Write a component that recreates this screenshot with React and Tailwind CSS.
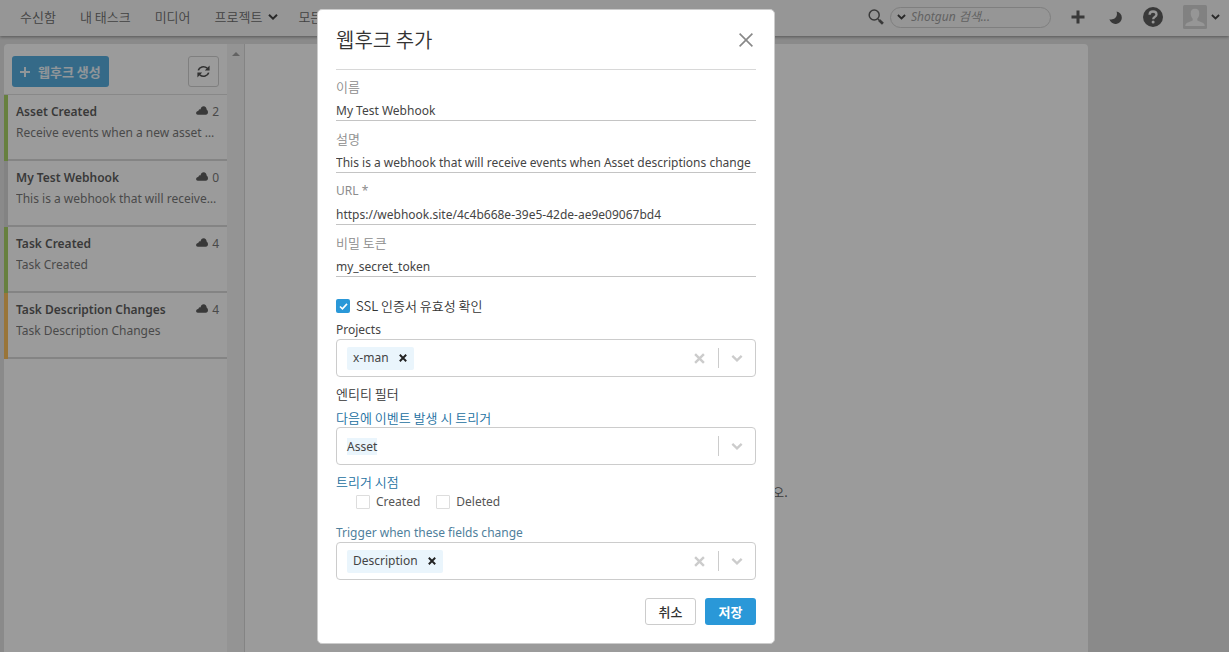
import React from "react";

const webhooks = [
  { name: "Asset Created", text: "Receive events when a new asset was created", count: 2, bar: "border-[#93c63f]" },
  { name: "My Test Webhook", text: "This is a webhook that will receive events when Asset descriptions change", count: 0, bar: "border-[#cccccc]" },
  { name: "Task Created", text: "Task Created", count: 4, bar: "border-[#93c63f]" },
  { name: "Task Description Changes", text: "Task Description Changes", count: 4, bar: "border-[#fbb034]" },
];

const fields = [
  { id: "name", label: "이름", value: "My Test Webhook" },
  { id: "description", label: "설명", value: "This is a webhook that will receive events when Asset descriptions change" },
  { id: "url", label: "URL *", value: "https://webhook.site/4c4b668e-39e5-42de-ae9e09067bd4" },
  { id: "token", label: "비밀 토큰", value: "my_secret_token" },
];

const latin = "font-['Noto_Sans','Noto_Sans_CJK_KR',sans-serif] text-[12px] font-normal";

function Chevron({ className }) {
  return (
    <svg viewBox="0 0 10 6" className={className} fill="none" stroke="currentColor" strokeWidth="2">
      <path d="M1 .8 5 4.6 9 .8" />
    </svg>
  );
}

function Cross({ className, strokeWidth }) {
  return (
    <svg viewBox="0 0 10 10" className={className} fill="none" stroke="currentColor" strokeWidth={strokeWidth}>
      <path d="M1 1 9 9M9 1 1 9" />
    </svg>
  );
}

function Header() {
  return (
    <header className="relative flex h-9 shrink-0 items-center justify-between bg-[#f4f4f4] pb-[2px] pl-5 pr-[9px] shadow-[0_1px_3px_rgba(0,0,0,0.5)]">
      <nav className="flex items-center gap-6 whitespace-nowrap text-[#444]">
        <a href="#inbox">수신함</a>
        <a href="#tasks">내 태스크</a>
        <a href="#media">미디어</a>
        <a href="#projects" className="flex items-center gap-[6px]">
          프로젝트
          <Chevron className="h-[6px] w-[10px] text-[#111]" />
        </a>
        <a href="#apps" className="-ml-1">모든 앱</a>
      </nav>
      <div className="flex items-center text-[#333]">
        <svg viewBox="0 0 16 16" className="size-4" fill="none" stroke="currentColor">
          <circle cx="6.2" cy="6" r="5" strokeWidth="1.5" />
          <path d="m10 10 1.6 1.6" strokeWidth="1.5" />
          <path d="m11.3 11.3 3.6 3.4" strokeWidth="2.8" />
        </svg>
        <div className="ml-[6px] flex h-[21px] w-[161px] items-center rounded-full border border-[#c4c4c4] pl-[6px]">
          <button aria-label="검색 범위">
            <Chevron className="h-[6px] w-[9px] text-[#111]" />
          </button>
          <input aria-label="검색" placeholder="Shotgun 검색..." className={`ml-[5px] w-32 bg-transparent italic outline-none placeholder:text-[#888] ${latin}`} />
        </div>
        <button aria-label="추가" className="ml-5">
          <svg viewBox="0 0 14 14" className="size-[14px]" stroke="currentColor" strokeWidth="3">
            <path d="M7 .5v13M.5 7h13" />
          </svg>
        </button>
        <button aria-label="테마" className="ml-6">
          <svg viewBox="0 0 13 13" className="size-[13px]" fill="currentColor">
            <path d="M7.600.5A6.300 6.300 0 1 1 .4 8.200C3.500 9.600 9.500 7 7.600.5Z" />
          </svg>
        </button>
        <button aria-label="도움말" className="ml-[21px]">
          <svg viewBox="0 0 20 20" className="size-5" fill="none">
            <circle cx="10" cy="10" r="10" fill="currentColor" />
            <path d="M6.6 7.7C6.6 5.6 8 4.5 10 4.5s3.5 1.1 3.5 2.9c0 2.4-3.3 2.5-3.3 4.8" stroke="#f4f4f4" strokeWidth="2.3" />
            <circle cx="10.1" cy="15" r="1.5" fill="#f4f4f4" />
          </svg>
        </button>
        <button aria-label="계정" className="ml-5 flex items-center gap-1">
          <svg viewBox="0 0 24 24" className="size-6">
            <rect width="24" height="24" rx="1.5" fill="#c9c9c9" />
            <path d="M12 3.8c3 0 4.4 2 4.3 4.8-.1 2.4-.9 4-2 5.200v1.700c2 1.200 5.400 1.700 6.700 3.300.5.7.7 1.500.7 2.200H2.300c0-.7.2-1.500.7-2.200 1.300-1.600 4.700-2.100 6.700-3.300v-1.700c-1.100-1.200-1.900-2.800-2-5.200C7.600 5.800 9 3.800 12 3.800Z" fill="#f4f4f4" />
          </svg>
          <Chevron className="h-[6px] w-[9px] text-[#111]" />
        </button>
      </div>
    </header>
  );
}

function Sidebar() {
  return (
    <aside className="flex w-60 shrink-0">
      <div className="min-w-0 grow bg-white">
        <div className="flex h-[51px] items-center justify-between border-b border-[#d8d8d8] px-2 pt-[5px]">
          <button className="flex h-[31px] items-center gap-2 rounded-[3px] bg-[#2a98d8] px-2 font-bold text-white/90">
            <svg viewBox="0 0 10 10" className="size-[10px]" stroke="currentColor" strokeWidth="2">
              <path d="M5 0v10M0 5h10" />
            </svg>
            웹후크 생성
          </button>
          <button aria-label="새로 고침" className="grid size-[31px] place-items-center rounded-[3px] border border-[#c4c4c4] text-[#222]">
            <svg viewBox="0 0 13 13" className="size-[13px]" fill="none" stroke="currentColor" strokeWidth="1.7">
              <path d="M1.300 5.400C2.200 2 7 .4 10.200 3.200M11.700 7.600C10.800 11 6 12.600 2.800 9.800" />
              <path d="M12.600.6V5.400H7.800ZM.4 12.400V7.600h4.800Z" fill="currentColor" stroke="none" />
            </svg>
          </button>
        </div>
        <ul>
          {webhooks.map((w) => (
            <li key={w.name} className={`h-[66px] border-l-4 ${w.bar}`}>
              <div className={`h-[66px] border-b-2 border-[#cfcfcf] px-2 pt-[7px] ${latin}`}>
                <div className="flex items-center justify-between leading-5 text-[#555]">
                  <b className="font-semibold text-[#333]">{w.name}</b>
                  <span className="flex items-center gap-1">
                    <svg viewBox="0 0 12 9" className="mb-1 h-[9px] w-3 text-[#333]" fill="currentColor">
                      <path d="M1.800 8.800C.4 8.800-.1 7.600.2 6.500.5 5.500 1.500 5 2.300 5c.2-1.200 1.200-1.800 2.200-1.600C4.900 1.400 6.100.2 7.600.2c1.900 0 3 1.400 3 3.400C11.500 4.200 12 5.200 12 6.300c0 1.500-.9 2.500-2.200 2.500Z" />
                    </svg>
                    {w.count}
                  </span>
                </div>
                <p className="truncate leading-[22px] text-[#555]">{w.text}</p>
              </div>
            </li>
          ))}
        </ul>
      </div>
      <div className="w-[17px] shrink-0 bg-[#f1f1f1] pt-2">
        <svg viewBox="0 0 8 4" className="mx-auto h-1 w-2" fill="#8a8a8a">
          <path d="M4 0 8 4H0Z" />
        </svg>
      </div>
    </aside>
  );
}

function SelectBox({ id, tag, value }) {
  return (
    <div className={`flex h-[38px] items-center rounded-[4px] border border-[#ccc] pl-[10px] text-[#ccc] ${latin}`}>
      {tag ? (
        <span className="flex h-[23px] items-center gap-[9px] rounded-[2px] bg-[#eaf5fc] px-[6px] text-[#444]">
          {tag}
          <button type="button" aria-label={`${tag} 제거`} className="grid size-[10px] place-items-center text-[#222]">
            <Cross className="size-2" strokeWidth="2.4" />
          </button>
        </span>
      ) : (
        <span className="bg-[#eaf5fc] leading-[17px] text-[#444]">{value}</span>
      )}
      <input id={id} className="h-5 w-4 min-w-0 grow outline-none" />
      {tag && (
        <button type="button" aria-label="모두 지우기" className="mr-[13px]">
          <Cross className="size-[11px]" strokeWidth="2.2" />
        </button>
      )}
      <span className="h-5 w-px bg-[#ccc]" />
      <button type="button" aria-label="목록 열기" className="px-3">
        <Chevron className="h-[7px] w-3" />
      </button>
    </div>
  );
}

function Modal() {
  return (
    <form role="dialog" aria-label="웹후크 추가" className="w-[458px] rounded-[5px] border border-[#ccc] bg-white px-[18px] pb-[18px] text-[#333]">
      <div className="flex h-[60px] items-center justify-between border-b border-[#d8d8d8] pt-px">
        <h1 className="text-[20px] font-[350] leading-7">웹후크 추가</h1>
        <button type="button" aria-label="닫기" className="mr-[2px] text-[#888]">
          <Cross className="size-4" strokeWidth="1" />
        </button>
      </div>
      <div className="mt-[7px] flex flex-col gap-2">
        {fields.map((f) => (
          <div key={f.id}>
            <label htmlFor={f.id} className={`block leading-5 text-[#8c8c8c] ${/^[A-Z]/.test(f.label) ? latin : ""}`}>{f.label}</label>
            <input id={f.id} defaultValue={f.value} className={`block h-6 w-full border-b border-[#c4c4c4] pt-1 leading-[17px] text-[#444] outline-none ${latin}`} />
          </div>
        ))}
      </div>
      <label className="mt-[19px] flex items-center gap-[6px] leading-5">
        <input type="checkbox" defaultChecked className="sr-only" />
        <span className="grid size-[14px] place-items-center rounded-[2px] bg-[#2a98d8] text-white">
          <svg viewBox="0 0 10 8" className="h-[7px] w-[9px]" fill="none" stroke="currentColor" strokeWidth="1.8">
            <path d="M1 4 3.800 6.600 9 1" />
          </svg>
        </span>
        SSL 인증서 유효성 확인
      </label>
      <label htmlFor="projects" className={`mt-[5px] block leading-[18px] text-[#444] ${latin}`}>Projects</label>
      <SelectBox id="projects" tag="x-man" />
      <h2 className="mt-2 leading-[18px]">엔티티 필터</h2>
      <label htmlFor="entity" className="mt-[6px] block leading-[18px] text-[#1b6f9f]">다음에 이벤트 발생 시 트리거</label>
      <SelectBox id="entity" value="Asset" />
      <fieldset className="mt-2">
        <legend className="leading-[18px] text-[#1b6f9f]">트리거 시점</legend>
        <div className={`mt-[2px] flex gap-4 pl-5 leading-[18px] text-[#555] ${latin}`}>
          {["Created", "Deleted"].map((t) => (
            <label key={t} className="flex items-center gap-[6px]">
              <input type="checkbox" className="size-[14px] appearance-none rounded-[1px] border border-[#ddd]" />
              {t}
            </label>
          ))}
        </div>
      </fieldset>
      <label htmlFor="changes" className={`mt-[13px] block leading-[18px] text-[#4f7f9c] ${latin}`}>Trigger when these fields change</label>
      <SelectBox id="changes" tag="Description" />
      <div className="mt-[18px] flex justify-end gap-[9px]">
        <button type="button" className="h-[27px] w-[51px] rounded-[3px] border border-[#ccc] font-medium">취소</button>
        <button className="h-[27px] w-[51px] rounded-[3px] bg-[#2a98d8] font-bold text-white">저장</button>
      </div>
    </form>
  );
}

export default function App() {
  return (
    <div className="flex h-screen flex-col overflow-hidden bg-[#dcdcdc] font-['Noto_Sans_CJK_KR',sans-serif] text-[13px] font-[350] leading-5">
      <Header />
      <main className="mr-[141px] ml-1 mt-2 flex min-h-0 grow overflow-hidden rounded-t-[4px]">
        <Sidebar />
        <section className="flex grow items-center justify-center border-l border-[#d0d0d0] bg-white pt-[288px] text-[#333]">
          웹후크를 선택하여 세부 정보를 확인하십시오.
        </section>
      </main>
      <div className="fixed inset-0 flex items-start justify-center bg-[#3f3f3f]/52 pr-[137px] pt-[9px]">
        <Modal />
      </div>
    </div>
  );
}
